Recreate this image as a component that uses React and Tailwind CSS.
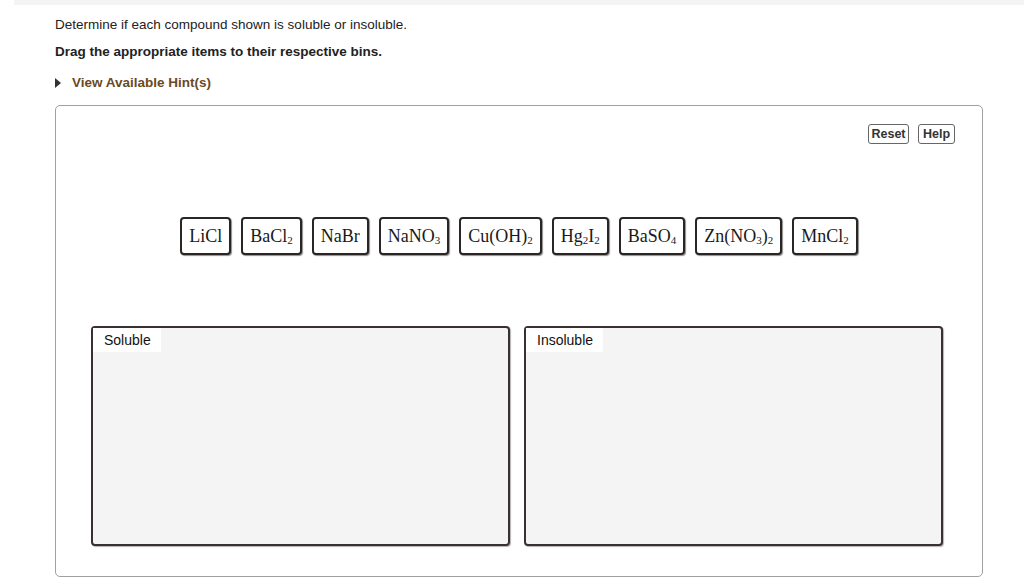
import React from "react";

const sans = { fontFamily: '"Liberation Sans", Arial, sans-serif' };
const serif = { fontFamily: '"Liberation Serif", "Times New Roman", serif' };

function Sub({ children }) {
  return <sub className="text-[11px] leading-none relative top-[2px] align-baseline">{children}</sub>;
}

const items = [
  { key: "LiCl", node: <>LiCl</> },
  { key: "BaCl2", node: <>BaCl<Sub>2</Sub></> },
  { key: "NaBr", node: <>NaBr</> },
  { key: "NaNO3", node: <>NaNO<Sub>3</Sub></> },
  { key: "CuOH2", node: <>Cu(OH)<Sub>2</Sub></> },
  { key: "Hg2I2", node: <>Hg<Sub>2</Sub>I<Sub>2</Sub></> },
  { key: "BaSO4", node: <>BaSO<Sub>4</Sub></> },
  { key: "ZnNO32", node: <>Zn(NO<Sub>3</Sub>)<Sub>2</Sub></> },
  { key: "MnCl2", node: <>MnCl<Sub>2</Sub></> },
];

function Tile({ children }) {
  return (
    <div
      className="h-[38px] px-[7px] flex items-center justify-center rounded-[4px] border-2 border-[#2b2626] bg-white text-[18px] text-[#1a1a1a] shadow-[1px_1px_1px_rgba(0,0,0,0.45)]"
      style={serif}
    >
      <span className="leading-none">{children}</span>
    </div>
  );
}

function Bin({ label }) {
  return (
    <div className="w-[419px] h-[220px] rounded-[4px] border-2 border-[#3a3030] bg-[#f4f4f4] shadow-[1px_1px_1px_rgba(0,0,0,0.3)]">
      <div className="inline-block bg-white pl-[11px] pr-[10px] pt-[4px] pb-[4px] text-[14px] text-[#111] leading-[16px]" style={sans}>
        {label}
      </div>
    </div>
  );
}

export default function App() {
  return (
    <div className="w-[1024px] h-[587px] bg-white overflow-hidden" style={sans}>
      <div className="ml-[14px] h-[5px] bg-[#f4f4f4]" />
      <div className="pl-[55px] pr-[41px]">
        <p className="mt-[12px] text-[13.5px] leading-[16px] text-[#222]">
          Determine if each compound shown is soluble or insoluble.
        </p>
        <p className="mt-[11px] text-[13.5px] leading-[16px] font-bold text-[#222]">
          Drag the appropriate items to their respective bins.
        </p>
        <div className="mt-[15px] flex items-center h-[16px]">
          <svg width="6" height="10" viewBox="0 0 6 10" className="mr-[11px]">
            <polygon points="0,0 6,5 0,10" fill="#333" />
          </svg>
          <span className="text-[13.5px] font-bold text-[#6b4a1f]">View Available Hint(s)</span>
        </div>
        <div className="mt-[14px] h-[472px] rounded-[5px] border border-[#a0a0a0] flex flex-col">
          <div className="flex justify-end gap-[9px] mt-[18px] mr-[27px]">
            <button className="h-[20px] w-[41px] rounded-[3px] border border-[#666] bg-white text-[12.5px] font-bold text-[#333] leading-none">
              Reset
            </button>
            <button className="h-[20px] w-[37px] rounded-[3px] border border-[#666] bg-white text-[12.5px] font-bold text-[#333] leading-none">
              Help
            </button>
          </div>
          <div className="mt-[73px] flex justify-center gap-[10px]">
            {items.map((it) => (
              <Tile key={it.key}>{it.node}</Tile>
            ))}
          </div>
          <div className="mt-[71px] flex gap-[14px] pl-[35px]">
            <Bin label="Soluble" />
            <Bin label="Insoluble" />
          </div>
        </div>
      </div>
    </div>
  );
}
